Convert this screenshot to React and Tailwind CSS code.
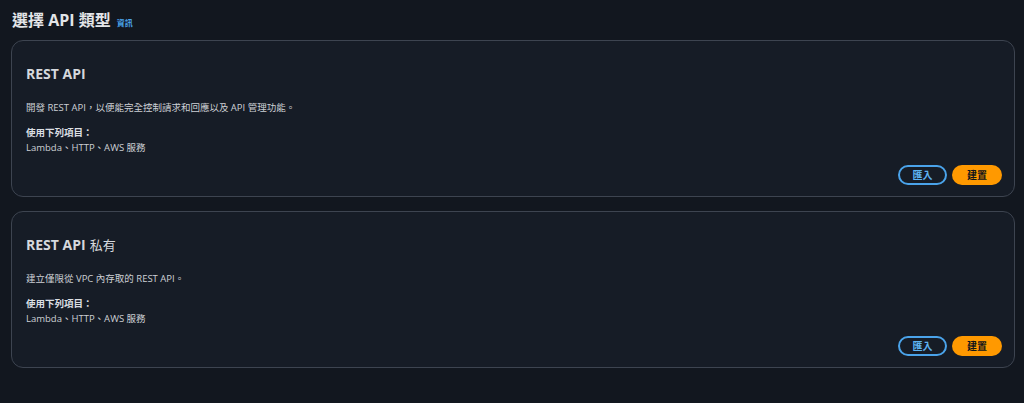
import React from 'react';

const cards = [
    {
        title: 'REST API',
        suffix: null,
        desc: '開發 REST API，以便能完全控制請求和回應以及 API 管理功能。',
    },
    {
        title: 'REST API',
        suffix: '私有',
        desc: '建立僅限從 VPC 內存取的 REST API。',
    },
];

const ApiCard = ({ card }) => (
    <div className="rounded-[12px] border border-[#3d4450] bg-[#161c26] pl-[14px] pr-[12px] pt-[23px] pb-[11px]">
        <h2 className="text-[14px] leading-[20px] font-bold text-[#d5d8dd]">
            {card.title}
            {card.suffix && <span className="ml-[4px] text-[13px] font-normal">{card.suffix}</span>}
        </h2>
        <p className="mt-[16px] text-[9.5px] leading-[16px] text-[#cdd0d5]">{card.desc}</p>
        <div className="mt-[9px] text-[9.5px] leading-[15px] text-[#cdd0d5]">
            <div className="font-bold text-[#dcdfe3]">使用下列項目：</div>
            <div>Lambda、HTTP、AWS 服務</div>
        </div>
        <div className="mt-[10px] flex justify-end gap-[5px]">
            <button className="h-[20px] w-[49px] rounded-full border-2 border-[#4aa3ea] text-[10px] font-bold text-[#5eb3f2]">
                匯入
            </button>
            <button className="h-[20px] w-[50px] rounded-full bg-[#ff9900] text-[10px] font-bold text-[#0f141a]">
                建置
            </button>
        </div>
    </div>
);

const App = () => {
    return (
        <div
            className="min-h-[403px] bg-[#12171f] pl-[11px] pr-[9px] pt-[8px] pb-[36px]"
            style={{ fontFamily: '"Open Sans", "Noto Sans CJK TC", sans-serif' }}
        >
            <div className="flex items-baseline gap-[6px] pl-[1px]">
                <h1 className="text-[16px] leading-[24px] font-bold text-[#e3e5e8]">選擇 API 類型</h1>
                <span className="text-[8px] font-bold text-[#4aa3ea]">資訊</span>
            </div>
            <div className="mt-[8px] flex flex-col gap-[14px]">
                {cards.map((card, key) => (
                    <ApiCard key={key} card={card} />
                ))}
            </div>
        </div>
    );
};

export default App;
